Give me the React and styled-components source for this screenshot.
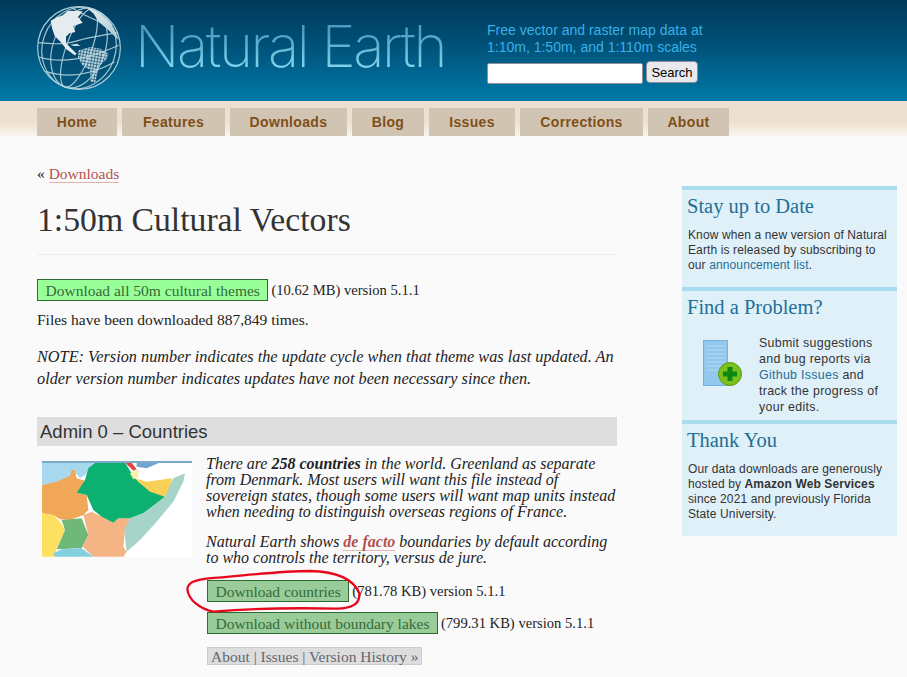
import React from "react";
import styled, { createGlobalStyle } from "styled-components";

const serif = `"Liberation Serif", "DejaVu Serif", serif`;
const sans = `"Liberation Sans", Arial, sans-serif`;

const tabs = [
  { label: "Home", width: 80 },
  { label: "Features", width: 103 },
  { label: "Downloads", width: 117 },
  { label: "Blog", width: 72 },
  { label: "Issues", width: 86 },
  { label: "Corrections", width: 123 },
  { label: "About", width: 81 },
];

const GlobalStyle = createGlobalStyle`
  html, body { margin: 0; padding: 0; background: #fafafa; }
  body { font-family: ${serif}; color: #222; overflow: hidden; height: 677px; }
  a { text-decoration: none; }
`;

const Header = styled.header`
  height: 101px;
  background: linear-gradient(#003a5a 0%, #004e75 40%, #007aa8 100%);
  display: flex;
  box-sizing: border-box;
  padding-left: 37px;
`;

const GlobeSvg = styled.svg`
  display: block;
  flex: none;
  margin-top: 6px;
`;

const LogoName = styled.div`
  flex: none;
  width: 352px;
  height: 78px;
  margin: 11px 0 0 14px;
  font-family: Inter, sans-serif;
  font-weight: 200;
  font-size: 58px;
  line-height: 70px;
  letter-spacing: -2.4px;
  white-space: nowrap;
  background: linear-gradient(#4a9cc0 25%, #8cdcf4 80%);
  -webkit-background-clip: text;
  background-clip: text;
  color: transparent;
`;

const Tagline = styled.div`
  font: 14px/17px ${sans};
  color: #3bafe6;
  padding-top: 22px;
`;

const SearchRow = styled.form`
  display: flex;
  align-items: flex-start;
  margin-top: 5px;
  gap: 3px;
`;

const SearchInput = styled.input`
  width: 156px;
  height: 21px;
  margin-top: 2px;
  box-sizing: border-box;
  border: 1px solid #8f8f9d;
  border-radius: 2px;
  background: #fff;
`;

const SearchButton = styled.button`
  width: 52px;
  height: 22px;
  padding: 0;
  box-sizing: border-box;
  border: 1px solid #8f8f9d;
  border-radius: 4px;
  background: #e9e9ed;
  color: #000;
  font: 13px ${sans};
`;

const Nav = styled.nav`
  height: 35px;
  padding: 7px 0 0 37px;
  box-sizing: border-box;
  display: flex;
  gap: 5px;
  background: linear-gradient(#eee0d0 0%, #eee0d0 60%, #f8f5f0 100%);
`;

const Tab = styled.a`
  width: ${(p) => p.$width}px;
  height: 28px;
  text-align: center;
  background: #d2c4b2;
  color: #7f4f18;
  font: bold 14px/29px ${sans};
  letter-spacing: 0.35px;
`;

const Page = styled.div`
  display: flex;
  padding-left: 37px;
`;

const Main = styled.main`
  width: 580px;
  padding-top: 29px;
  font-size: 15.5px;
  line-height: 24px;
`;

const Crumb = styled.div`
  line-height: 18px;
`;

const CrumbLink = styled.a`
  color: #b4544f;
  border-bottom: 1px solid #e8b0ac;
`;

const Title = styled.h1`
  margin: 18px 0 0;
  padding-bottom: 15px;
  border-bottom: 1px solid #eeeeee;
  font: 400 33.7px/38px ${serif};
  color: #333;
`;

const DownloadLine = styled.div`
  margin: ${(p) => p.$top}px 0 0 ${(p) => p.$left || 0}px;
  height: 22px;
  display: flex;
  align-items: center;
  gap: 3px;
  white-space: nowrap;
`;

const DownloadButton = styled.a`
  display: block;
  height: 22px;
  line-height: 21px;
  padding: 0 7.5px;
  box-sizing: border-box;
  border: 1px solid #2e6b32;
  background: ${(p) => (p.$bright ? "#99ff99" : "#99cc99")};
  color: #356b3a;
`;

const FileSize = styled.span`
  font-size: 14.6px;
`;

const Para = styled.p`
  margin: ${(p) => p.$top}px 0 0;
  line-height: ${(p) => p.$line || 24}px;
  font-style: ${(p) => (p.$italic ? "italic" : "normal")};
  font-size: ${(p) => (p.$italic ? "16.3px" : "inherit")};
`;

const SectionBar = styled.h2`
  margin: 27px 0 0;
  height: 29px;
  padding-left: 3px;
  background: #dedede;
  font: 400 18.5px/30px ${sans};
  color: #333;
`;

const Theme = styled.div`
  display: flex;
  margin-top: 10px;
`;

const Thumb = styled.div`
  width: 150px;
  height: 96px;
  margin: 5px 14px 0 5px;
  flex: none;
`;

const ThemeBody = styled.div`
  position: relative;
  width: 411px;
  flex: none;
`;

const ThemeText = styled.p`
  margin: ${(p) => p.$top || 0}px 0 0;
  font-style: italic;
  line-height: 16px;
  font-size: 16px;
`;

const DeFacto = styled.b`
  color: #b4504c;
  border-bottom: 1px solid #e8b8b4;
`;

const MetaLinks = styled.div`
  display: inline-block;
  margin: 13px 0 0 1px;
  height: 18px;
  line-height: 17px;
  padding: 0 3px;
  box-sizing: border-box;
  border: 1px solid #ccc;
  background: #dddddd;
  color: #66666e;
`;

const RedCircle = styled.svg`
  position: absolute;
  left: -36px;
  top: 109px;
  pointer-events: none;
`;

const Side = styled.aside`
  width: 215px;
  margin: 50px 0 0 65px;
  align-self: flex-start;
  background: #e0f0f8;
  font: 12px/15px ${sans};
  letter-spacing: 0.12px;
  color: #333;
`;

const SideBlock = styled.section`
  border-top: 4px solid #a8dcee;
  padding: 0 5px;
  height: ${(p) => p.$height}px;
  box-sizing: border-box;
`;

const SideTitle = styled.h3`
  margin: 0;
  font: 400 20.5px/24px ${serif};
  letter-spacing: 0;
  color: #1f6f96;
  padding-top: 4px;
`;

const SideText = styled.p`
  margin: ${(p) => p.$top}px 0 0 1px;
`;

const SideLink = styled.a`
  color: #1f6f96;
`;

const ProblemRow = styled.div`
  display: flex;
  margin-top: 16px;
  padding-left: 16px;
  font-size: 12.4px;
  line-height: 16px;
  letter-spacing: 0.3px;
`;

const ProblemIcon = styled.svg`
  flex: none;
  margin: 5px 16px 0 0;
`;

const ProblemText = styled.div`
  width: 125px;
`;

function Globe() {
  // drawn in 3x units, same scale as the reference crop
  return (
    <GlobeSvg width="84" height="84" viewBox="15 12 252 252">
      <defs>
        <pattern id="dots" width="9" height="9" patternUnits="userSpaceOnUse" patternTransform="rotate(10)">
          <rect width="7" height="7" fill="#c4d8de" />
        </pattern>
        <linearGradient id="cap" x1="0" y1="0" x2="1" y2="1">
          <stop offset="0" stopColor="#e8eef0" />
          <stop offset="1" stopColor="#a8c8d4" />
        </linearGradient>
      </defs>
      <circle cx="141" cy="138" r="124" fill="#063f60" fillOpacity="0.45" stroke="#a9cfdc" strokeWidth="3.5" />
      <g fill="none" stroke="#b4d4de" strokeWidth="3.5" opacity="0.9">
        <ellipse cx="141" cy="138" rx="38" ry="124" transform="rotate(20 141 138)" />
        <ellipse cx="141" cy="138" rx="78" ry="124" transform="rotate(20 141 138)" />
        <ellipse cx="141" cy="138" rx="110" ry="124" transform="rotate(20 141 138)" />
        <path d="M20 122 Q90 130 130 118 T258 92" />
        <path d="M20 165 Q120 195 260 130" />
        <path d="M40 208 Q140 240 248 180" />
        <path d="M120 18 Q190 60 240 68" />
      </g>
      <path d="M165 18 C210 28 248 65 260 115 L240 95 L225 80 L200 60 L185 35 Z" fill="url(#cap)" />
      <path
        d="M56 56 L75 46 L92 40 L108 26 L152 28 L138 45 L152 62 L132 70 L124 72 L130 90 L112 94 L102 104 L102 122 L114 136 L134 155 L128 160 L103 142 L86 120 L68 102 L60 78 Z"
        fill="#e4ecef"
      />
      <path d="M115 128 L135 125 L145 132 L125 132 Z" fill="#c8dce2" />
      <path
        d="M140 145 L175 135 L205 140 L230 155 L225 170 L205 190 L195 215 L190 240 L175 240 L175 205 L150 190 L138 165 Z"
        fill="url(#dots)"
      />
    </GlobeSvg>
  );
}

function MapThumb() {
  return (
    <svg width="150" height="96" viewBox="36 33 450 288" style={{ display: "block" }}>
      <rect x="36" y="33" width="450" height="288" fill="#fff" />
      <path d="M36 33 H195 L165 75 L150 85 L130 60 L120 80 L90 95 L36 105 Z" fill="#a8d8ee" />
      <path d="M320 33 H400 L350 55 L320 50 Z" fill="#74a4d2" />
      <path d="M36 105 L80 95 L120 78 L125 60 L135 60 L140 85 L165 92 L140 128 L170 135 L175 180 L160 195 L120 210 L90 208 L70 195 L36 190 Z" fill="#f0a858" />
      <path d="M36 190 L70 195 L90 215 L105 240 L80 295 L75 320 H36 Z" fill="#fde060" />
      <path d="M95 210 L155 205 L175 255 L155 295 L80 298 L105 240 Z" fill="#70b878" />
      <path d="M160 195 L185 185 L215 200 L250 218 L265 205 L300 205 L285 240 L280 290 L290 305 L280 320 H190 L158 290 L175 255 Z" fill="#f4b484" />
      <path d="M175 55 L195 38 H285 L305 70 L315 85 L330 100 L405 140 L380 160 L340 190 L300 205 L265 205 L250 218 L215 200 L190 180 L170 135 L140 128 L165 90 Z" fill="#0cb070" />
      <path d="M285 38 H305 L320 58 L310 62 Z" fill="#e04848" />
      <path d="M300 70 L325 58 L325 80 L310 88 Z" fill="#f6f0a8" />
      <path d="M315 85 L350 95 L425 85 L425 110 L405 140 L360 125 L330 100 Z" fill="#f8d058" />
      <path d="M405 140 L430 85 L465 70 L460 95 L430 155 L380 215 L330 270 L290 305 L283 240 L300 205 L340 190 L380 160 Z" fill="#a6d4c8" />
      <path d="M75 320 L70 310 L95 298 L155 295 L190 320 Z" fill="#84d0e0" />
      <rect x="36" y="33" width="450" height="6" fill="#7ba9c8" />
    </svg>
  );
}

export default function App() {
  return (
    <>
      <GlobalStyle />
      <Header>
        <Globe />
        <LogoName>Natural Earth</LogoName>
        <div>
          <Tagline>
            Free vector and raster map data at
            <br />
            1:10m, 1:50m, and 1:110m scales
          </Tagline>
          <SearchRow onSubmit={(e) => e.preventDefault()}>
            <SearchInput type="text" />
            <SearchButton type="submit">Search</SearchButton>
          </SearchRow>
        </div>
      </Header>
      <Nav>
        {tabs.map((t) => (
          <Tab key={t.label} href="#" $width={t.width}>{t.label}</Tab>
        ))}
      </Nav>
      <Page>
        <Main>
          <Crumb>« <CrumbLink href="#">Downloads</CrumbLink></Crumb>
          <Title>1:50m Cultural Vectors</Title>
          <DownloadLine $top={24}>
            <DownloadButton $bright href="#">Download all 50m cultural themes</DownloadButton>
            <FileSize>(10.62 MB) version 5.1.1</FileSize>
          </DownloadLine>
          <Para $top={7}>Files have been downloaded 887,849 times.</Para>
          <Para $top={14} $line={22} $italic>
            NOTE: Version number indicates the update cycle when that theme was last updated. An older
            version number indicates updates have not been necessary since then.
          </Para>
          <SectionBar>Admin 0 – Countries</SectionBar>
          <Theme>
            <Thumb><MapThumb /></Thumb>
            <ThemeBody>
              <ThemeText>
                There are <b>258 countries</b> in the world. Greenland as separate from Denmark. Most
                users will want this file instead of sovereign states, though some users will want map
                units instead when needing to distinguish overseas regions of France.
              </ThemeText>
              <ThemeText $top={14}>
                Natural Earth shows <DeFacto>de facto</DeFacto> boundaries by default according to who
                controls the territory, versus de jure.
              </ThemeText>
              <DownloadLine $top={14} $left={1}>
                <DownloadButton href="#">Download countries</DownloadButton>
                <FileSize>(781.78 KB) version 5.1.1</FileSize>
              </DownloadLine>
              <DownloadLine $top={10} $left={1}>
                <DownloadButton href="#">Download without boundary lakes</DownloadButton>
                <FileSize>(799.31 KB) version 5.1.1</FileSize>
              </DownloadLine>
              <MetaLinks>About | Issues | Version History »</MetaLinks>
              <RedCircle width="200" height="50" viewBox="0 0 600 150" fill="none">
                <path
                  d="M115 40 C200 35 320 18 420 18 C500 20 550 40 568 85 C570 115 550 130 500 131 C380 128 250 130 130 140 C90 132 55 105 52 72 C54 52 75 45 115 40 Z"
                  stroke="#e8081c"
                  strokeWidth="7"
                />
              </RedCircle>
            </ThemeBody>
          </Theme>
        </Main>
        <Side>
          <SideBlock $height={101}>
            <SideTitle>Stay up to Date</SideTitle>
            <SideText $top={10}>
              Know when a new version of Natural Earth is released by subscribing to our{" "}
              <SideLink href="#">announcement list</SideLink>.
            </SideText>
          </SideBlock>
          <SideBlock $height={133}>
            <SideTitle>Find a Problem?</SideTitle>
            <ProblemRow>
              <ProblemIcon width="40" height="47" viewBox="0 0 40 47">
                <rect x="0.5" y="0.5" width="24" height="45" fill="#92c8ee" stroke="#72b0e0" />
                <path d="M3 6 H22 M3 10 H22 M3 14 H22 M3 18 H22 M3 22 H22 M3 26 H22 M3 30 H22" stroke="#b4daf4" />
                <circle cx="27" cy="34" r="11.5" fill="#7cc020" stroke="#5a9c10" />
                <path d="M24.5 27 H29.5 V31.5 H34 V36.5 H29.5 V41 H24.5 V36.5 H20 V31.5 H24.5 Z" fill="#0c8a10" />
              </ProblemIcon>
              <ProblemText>
                Submit suggestions and bug reports via <SideLink href="#">Github Issues</SideLink> and track
                the progress of your edits.
              </ProblemText>
            </ProblemRow>
          </SideBlock>
          <SideBlock $height={116}>
            <SideTitle>Thank You</SideTitle>
            <SideText $top={10}>
              Our data downloads are generously hosted by <b>Amazon Web Services</b> since 2021 and previously
              Florida State University.
            </SideText>
          </SideBlock>
        </Side>
      </Page>
    </>
  );
}
